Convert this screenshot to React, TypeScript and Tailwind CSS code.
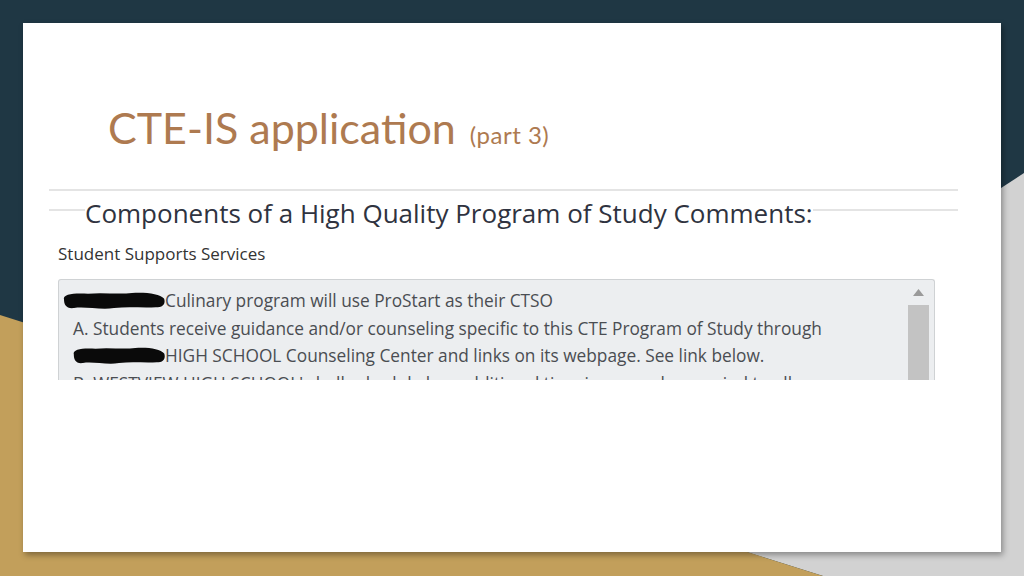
import React from 'react';

const lines = [
  { blot: 'first', text: 'Culinary program will use ProStart as their CTSO' },
  { blot: '', text: 'A. Students receive guidance and/or counseling specific to this CTE Program of Study through' },
  { blot: 'second', text: 'HIGH SCHOOL Counseling Center and links on its webpage. See link below.' },
  { blot: '', text: "B. WESTVIEW HIGH SCHOOL's bell schedule has additional time in every class period to allow" },
];

const Blot: React.FC<{ kind: string }> = ({ kind }) => (
  <svg
    width={kind === 'first' ? 104 : 94}
    height="19"
    viewBox="0 0 104 20"
    preserveAspectRatio="none"
    className={kind === 'first' ? 'shrink-0 -mr-[1px]' : 'shrink-0 ml-[10px] -mr-[1px]'}
  >
    <path
      d="M2 9 C0 3 14 2 26 3 C40 1 56 4 70 2 C84 1 98 3 102 8 C104 13 101 18 94 17 C80 18 66 16 52 18 C38 20 22 16 12 18 C4 19 2 14 2 9 Z"
      fill="#0a0a0a"
    />
  </svg>
);

export default function App() {
  return (
    <div className="relative w-[1024px] h-[576px] overflow-hidden bg-[#1f3744]">
      <svg className="absolute inset-0" width="1024" height="576" viewBox="0 0 1024 576">
        <polygon points="1024,173 541,487 823,576 1024,576" fill="#d2d2d2" />
        <polygon points="0,315 823,576 0,576" fill="#c29f5b" />
      </svg>

      <div className="relative ml-[23px] mt-[23px] w-[978px] h-[529px] bg-white shadow-[2px_3px_6px_rgba(0,0,0,0.35)] flex flex-col">
        <div className="ml-[85px] mt-[83px] flex items-baseline gap-[14px] text-[#ae7a50] font-['Lato',sans-serif] leading-none">
          <span className="text-[43px]">CTE-IS application</span>
          <span className="text-[24px] tracking-[0.5px]">(part 3)</span>
        </div>

        <div className="ml-[26px] mt-[40px] w-[909px] flex flex-col font-['Open_Sans',sans-serif]">
          <div className="h-[2px] bg-[#e4e4e4]" />
          <div className="flex items-start mt-[6px] h-[32px]">
            <div className="w-[36px] h-[2px] mt-[12px] bg-[#e4e4e4]" />
            <span className="text-[26px] leading-[32px] text-[#2f3340]">
              Components of a High Quality Program of Study Comments:
            </span>
            <div className="flex-1 h-[2px] mt-[12px] bg-[#e4e4e4]" />
          </div>
          <div className="ml-[9px] mt-[14px] text-[17px] leading-[22px] text-[#333]">
            Student Supports Services
          </div>
          <div className="ml-[9px] mt-[14px] w-[877px] h-[101px] overflow-hidden rounded-t-[3px] border border-b-0 border-[#cfd2d4] bg-[#eceef0] flex">
            <div className="flex-1 min-w-0 pl-[3px] pt-[7px] text-[17.3px] leading-[27.5px] text-[#4a4d52]">
              {lines.map((l, i) => (
                <div key={i} className="flex items-center whitespace-nowrap">
                  {l.blot && <Blot kind={l.blot} />}
                  <span className={l.blot ? '' : 'pl-[11px]'}>{l.text}</span>
                </div>
              ))}
            </div>
            <div className="w-[27px] shrink-0 flex flex-col items-center pt-[9px] pr-[4px]">
              <svg width="11" height="7" viewBox="0 0 11 7">
                <polygon points="5.5,0 11,7 0,7" fill="#9a9a9a" />
              </svg>
              <div className="mt-[9px] w-[21px] flex-1 bg-[#c3c3c3]" />
            </div>
          </div>
        </div>
      </div>
    </div>
  );
}
